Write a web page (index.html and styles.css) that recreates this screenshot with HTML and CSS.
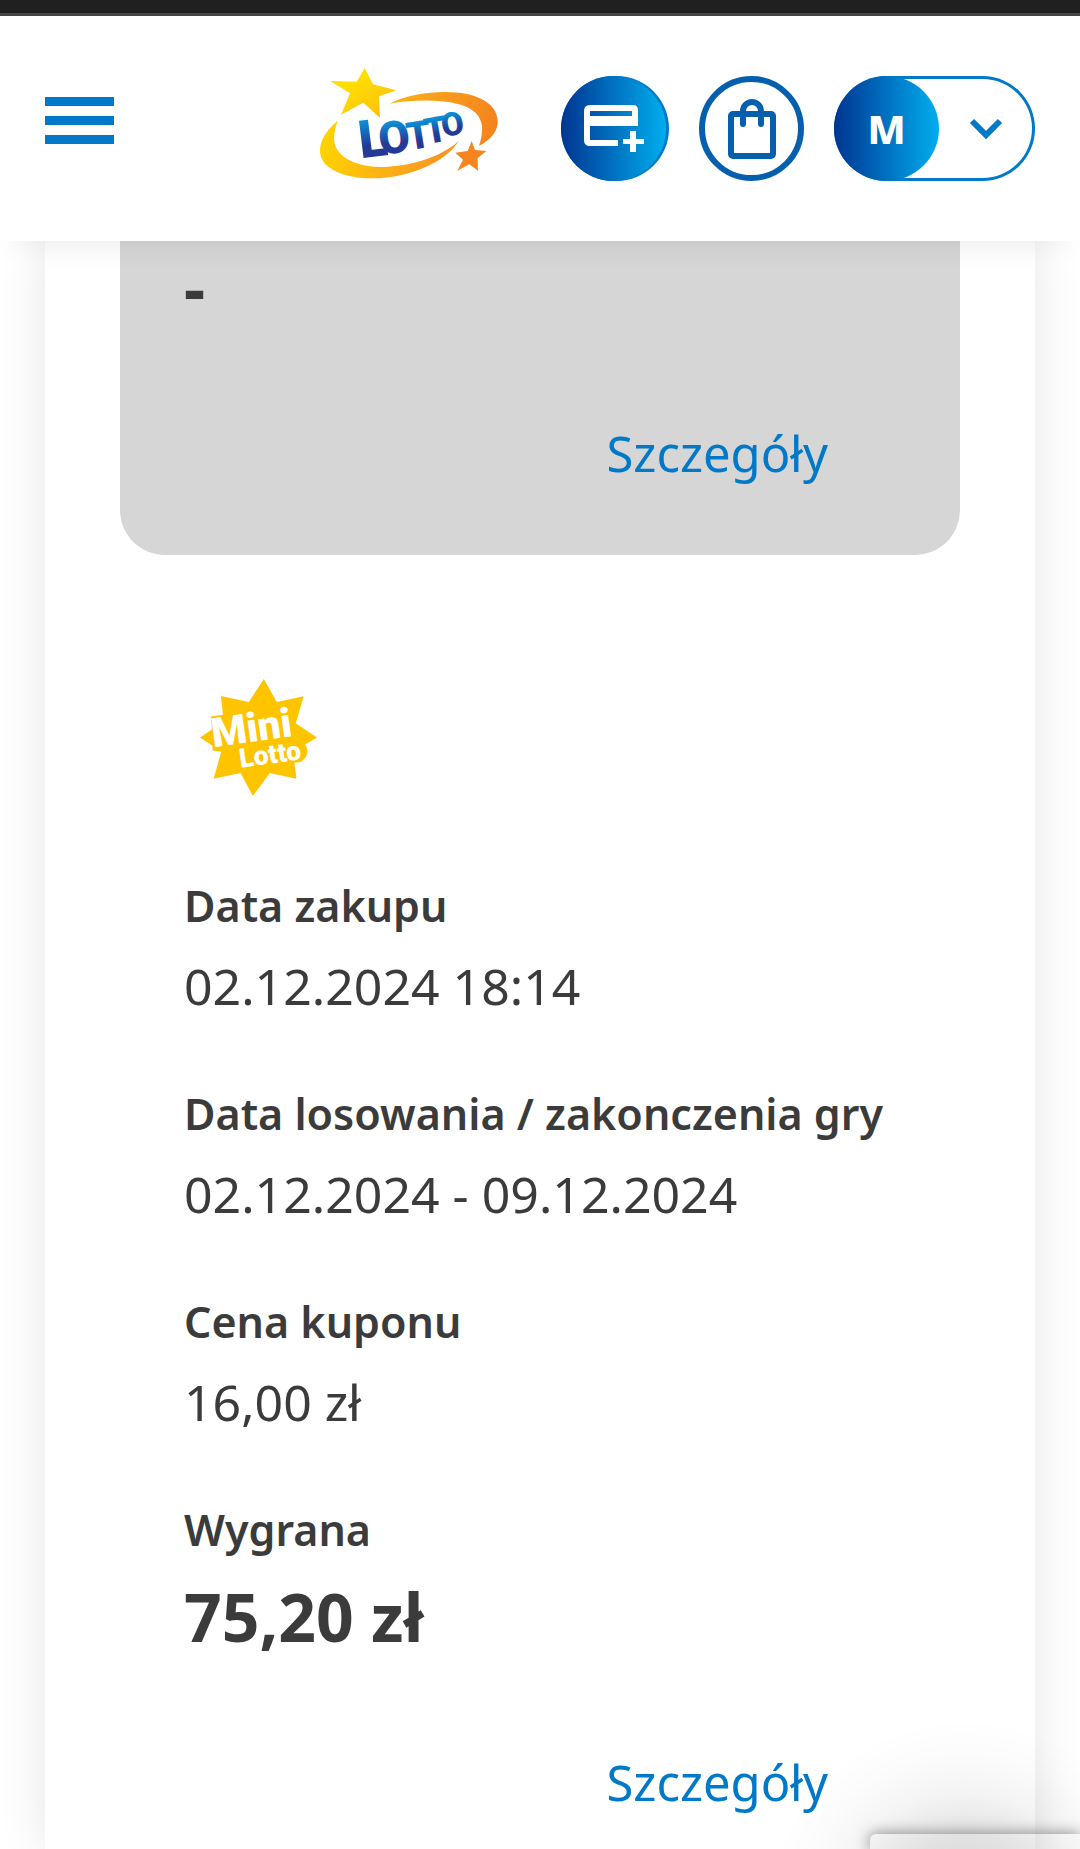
FILE: index.html
```html
<!DOCTYPE html>
<html lang="pl">
<head>
  <meta charset="UTF-8">
  <meta name="viewport" content="width=device-width, initial-scale=1.0">
  <title>Moje kupony</title>
  <link rel="stylesheet" href="styles.css">
</head>

<body>
  <header class="header">
    <button class="menu-btn" aria-label="Menu">
      <span></span>
      <span></span>
      <span></span>
    </button>

    <a class="logo" href="#" aria-label="Lotto">
      <svg viewBox="60 51 534 336">
        <defs>
          <linearGradient id="starFill" x1="0" y1="0" x2="1" y2="1">
            <stop offset="0.3" stop-color="#ffdf00"/>
            <stop offset="1" stop-color="#fdb813"/>
          </linearGradient>
          <linearGradient id="ringFill" gradientUnits="userSpaceOnUse" x1="60" y1="200" x2="580" y2="290">
            <stop offset="0" stop-color="#ffd600"/>
            <stop offset="0.5" stop-color="#fba919"/>
            <stop offset="1" stop-color="#f5821f"/>
          </linearGradient>
          <linearGradient id="textFill" x1="0" y1="0" x2="0" y2="1">
            <stop offset="0.2" stop-color="#0c8fd6"/>
            <stop offset="0.6" stop-color="#253a97"/>
          </linearGradient>
        </defs>
        <path fill="url(#ringFill)" d="M113 212C60 255 40 315 85 350C150 400 290 395 390 345C430 325 460 300 476 273C420 325 320 351 240 351C150 348 95 310 103 255Q105 232 113 212Z"/>
        <path fill="url(#ringFill)" d="M268 161C340 125 440 120 500 132C560 145 595 175 593 220C590 250 565 275 537 287C545 265 550 235 543 215C530 170 470 155 400 152Q330 150 268 161Z"/>
        <path fill="url(#starFill)" d="M194 54L219 103L289 121L237 139L240 204L190 158L123 194L150 130L90 93L170 95Z"/>
        <path fill="#f6851f" d="M515 273L525 300L559 303L533 324L534 362L508 343L472 362L489 329L466 308L503 303Z"/>
        <g class="logo-text" fill="url(#textFill)">
          <text x="182" y="325" font-size="158" transform="rotate(-7 182 325)">L</text>
          <text x="242" y="316" font-size="136" transform="rotate(-8 242 316)">O</text>
          <text x="326" y="301" font-size="116" transform="rotate(-9 326 301)">T</text>
          <text x="380" y="283" font-size="108" transform="rotate(-10 380 283)">T</text>
          <text x="430" y="262" font-size="98" transform="rotate(-10 430 262)">O</text>
        </g>
      </svg>
    </a>

    <div class="actions">
      <button class="wallet-btn" aria-label="Doładuj konto">
        <span class="disc">
          <svg viewBox="0 0 60 49">
            <path fill="#fff" fill-rule="evenodd" d="M6 1H49Q54 1 54 6V22H6V36H34V42H6Q0 42 0 36V7Q0 1 6 1ZM6 7V12H48V7Z"/>
            <path fill="#fff" d="M46 27H52V35H60V40H52V48H46V40H39V35H46Z"/>
          </svg>
        </span>
      </button>
      <button class="bag-btn" aria-label="Koszyk">
        <svg viewBox="0 0 48 60">
          <rect x="3" y="15" width="42" height="42" rx="2"/>
          <path d="M15 25V12A9 9 0 0 1 33 12V25" stroke-linecap="round"/>
        </svg>
      </button>
      <button class="user-btn" aria-label="Konto">
        <span class="disc">M</span>
        <svg viewBox="0 0 34 22">
          <path d="M3 3L17 17L31 3"/>
        </svg>
      </button>
    </div>
  </header>

  <main class="sheet">
    <section class="ticket settled">
      <p class="win">-</p>
      <a class="details" href="#">Szczegóły</a>
    </section>

    <section class="ticket">
      <svg class="game-logo" viewBox="58 57 352 352" role="img" aria-label="Mini Lotto">
        <path fill="#ffc400" d="M250 57L289 126L370 109L346 190L410 233L374 254A34 34 0 0 1 342 308L348 357L268 340L217 409L180 340L99 357L122 275L58 233L95 208L92 170L127 165L121 108L205 126Z"/>
        <path fill="#ffc400" d="M92 170L127 165V276L96 272Z"/>
        <text x="98" y="262" font-size="122" transform="rotate(-8 98 262)">Mini</text>
        <text x="180" y="324" font-size="80" transform="rotate(-8 180 324)">Lotto</text>
      </svg>

      <dl class="info">
        <div>
          <dt>Data zakupu</dt>
          <dd>02.12.2024 18:14</dd>
        </div>
        <div>
          <dt>Data losowania / zakonczenia gry</dt>
          <dd>02.12.2024 - 09.12.2024</dd>
        </div>
        <div>
          <dt>Cena kuponu</dt>
          <dd>16,00 zł</dd>
        </div>
        <div>
          <dt>Wygrana</dt>
          <dd class="win">75,20 zł</dd>
        </div>
      </dl>
      <a class="details" href="#">Szczegóły</a>
    </section>
  </main>

  <div class="chat-glow"></div>
  <div class="badge"></div>
</body>
</html>
```
FILE: styles.css
```css
* {
  margin: 0;
  padding: 0;
  box-sizing: border-box;
}

body {
  display: flex;
  flex-direction: column;
  min-height: 100vh;
  background: #fff;
  color: #3b3b3b;
  font-family: "Noto Sans", "Open Sans", sans-serif;
}

button {
  border: none;
  background: none;
  font-family: inherit;
  cursor: pointer;
}

svg {
  display: block;
}

/* header */
.header {
  position: sticky;
  top: 0;
  z-index: 2;
  display: flex;
  align-items: center;
  height: 241px;
  padding: 16px 45px 0;
  background: linear-gradient(#202020 13px, #444 13px, #444 16px, #fff 16px);
  box-shadow: 0 20px 30px -20px rgba(0, 0, 0, 0.1);
}

.menu-btn {
  display: flex;
  flex-direction: column;
  gap: 10px;
  width: 69px;
  margin-bottom: 16px;
}

.menu-btn span {
  width: 100%;
  height: 9px;
  background: #0079c8;
}

.logo {
  width: 178px;
  margin: 0 63px 12px auto;
}

.logo-text {
  font-family: Roboto, sans-serif;
  font-weight: 900;
}

.actions {
  display: flex;
  gap: 30px;
}

.actions button {
  display: flex;
  align-items: center;
  height: 105px;
  border-radius: 53px;
}

.disc {
  display: flex;
  align-items: center;
  justify-content: center;
  width: 105px;
  height: 105px;
  border-radius: 50%;
  background: linear-gradient(90deg, #003591, #00aeef);
  color: #fff;
  font-size: 40px;
  font-weight: 800;
  line-height: 52px;
}

.actions .wallet-btn {
  width: 108px;
  background: #0079c8;
}

.wallet-btn svg {
  width: 60px;
  height: 49px;
}

.actions .bag-btn {
  justify-content: center;
  width: 105px;
  border: 6px solid #065fac;
}

.bag-btn svg {
  width: 48px;
  height: 60px;
  fill: none;
  stroke: #065fac;
  stroke-width: 6;
}

.actions .user-btn {
  width: 201px;
  box-shadow: inset 0 0 0 3px #0079c8;
}

.user-btn svg {
  width: 34px;
  height: 22px;
  margin-left: 30px;
  fill: none;
  stroke: #0079c8;
  stroke-width: 6;
}

/* tickets */
.sheet {
  flex: 1;
  margin: 0 45px;
  padding: 0 75px;
  background: #fff;
  box-shadow: 0 0 45px rgba(0, 0, 0, 0.1);
}

.ticket {
  display: flex;
  flex-direction: column;
  padding: 124px 64px 36px;
}

.settled {
  padding: 6px 64px 72px;
  border-radius: 0 0 45px 45px;
  background: #d6d6d6;
}

.game-logo {
  width: 117px;
  height: 117px;
  margin: 0 16px 80px;
}

.game-logo text {
  fill: #fff;
  font-family: Roboto, sans-serif;
  font-weight: 900;
}

.info {
  display: flex;
  flex-direction: column;
  gap: 64px;
}

.info dt {
  margin-bottom: 16px;
  font-size: 43px;
  font-weight: 600;
  line-height: 60px;
}

.info dd {
  font-size: 50px;
  line-height: 68px;
}

.ticket .win {
  font-size: 66px;
  font-weight: 700;
  line-height: 80px;
}

.details {
  align-self: flex-end;
  margin: 96px 68px 0 0;
  color: #0079c8;
  font-size: 49px;
  line-height: 60px;
  text-decoration: none;
}

/* floating widgets in the corner */
.chat-glow {
  position: fixed;
  right: 0;
  bottom: 0;
  width: 330px;
  height: 140px;
  background: radial-gradient(circle 200px at 215px 210px, rgba(0, 0, 0, 0.16) 20%, rgba(0, 0, 0, 0.11) 42%, rgba(0, 0, 0, 0.04) 65%, rgba(0, 0, 0, 0.01) 85%, transparent);
  pointer-events: none;
}

.badge {
  position: fixed;
  right: 0;
  bottom: 0;
  width: 210px;
  height: 15px;
  border-radius: 6px 0 0 0;
  box-shadow: 0 0 15px gray;
}
```
